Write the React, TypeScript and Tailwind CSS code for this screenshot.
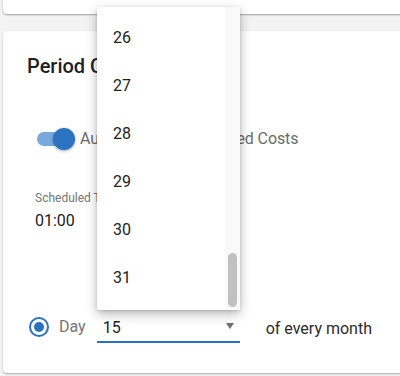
import React from "react";

export default function App() {
  const items = [26, 27, 28, 29, 30, 31];
  return (
    <div
      className="relative h-[376px] w-[400px] overflow-hidden bg-[#f3f3f4]"
      style={{ fontFamily: "Roboto, 'Liberation Sans', sans-serif" }}
    >
      <div className="flex flex-col pl-[3px]">
        {/* top card (mostly scrolled out) */}
        <div className="h-[14px] w-[420px] rounded-b-[4px] bg-white shadow-[0_1px_2px_rgba(0,0,0,0.35)]" />
        {/* main card */}
        <div className="mt-[17px] flex h-[342px] w-[420px] flex-col rounded-[4px] bg-white pl-[24px] shadow-[0_1px_2px_rgba(0,0,0,0.3)]">
          <div className="mt-[21px] h-[28px] text-[20px] font-medium leading-[28px] text-[#1f1f1f]">
            Period Close
          </div>
          {/* switch row */}
          <div className="mt-[47px] flex h-[24px] items-center">
            <div className="relative ml-[10px] h-[14px] w-[34px] rounded-full bg-[#79a9dc]">
              <div className="absolute left-[16px] top-[-4px] h-[22px] w-[22px] rounded-full bg-[#2b72c2] shadow-[0_1px_3px_rgba(0,0,0,0.35)]" />
            </div>
            <span className="ml-[9px] text-[16px] tracking-[-0.1px] text-[#6b6b6b]">
              Automatically Scheduled Costs
            </span>
          </div>
          {/* scheduled time */}
          <div className="ml-[8px] mt-[40px] text-[12px] leading-[14px] text-[#757575]">
            Scheduled Time
          </div>
          <div className="ml-[8px] mt-[6px] text-[16px] leading-[20px] text-[#222]">01:00</div>
          {/* day row */}
          <div className="mt-[82px] flex h-[40px] items-start">
            <div className="mt-[4px] ml-[2px] flex h-[20px] w-[20px] items-center justify-center rounded-full border-2 border-[#2b72c2]">
              <div className="h-[10px] w-[10px] rounded-full bg-[#2b72c2]" />
            </div>
            <span className="ml-[10px] mt-[4px] text-[16px] leading-[20px] text-[#757575]">Day</span>
            <div className="relative ml-[11px] flex h-[30px] w-[143px] items-start border-b-2 border-[#2b72c2] pl-[6px]">
              <span className="mt-[5px] text-[16px] leading-[20px] text-[#222]">15</span>
              <svg
                className="absolute left-[129px] top-[10px]"
                width="8"
                height="6"
                viewBox="0 0 8 6"
              >
                <path d="M0 0 L8 0 L4 6 Z" fill="#707070" />
              </svg>
            </div>
            <span className="ml-[26px] mt-[6px] text-[16px] leading-[20px] text-[#2c2c2c]">
              of every month
            </span>
          </div>
        </div>
      </div>

      {/* dropdown menu overlay */}
      <div className="absolute left-[97px] top-[7px] flex h-[303px] w-[143px] rounded-[2px] bg-white shadow-[0_4px_12px_rgba(0,0,0,0.28),0_1px_3px_rgba(0,0,0,0.15)]">
        <div className="flex flex-1 flex-col pt-[7px]">
          {items.map((n) => (
            <div
              key={n}
              className="flex h-[48px] items-center pl-[16px] text-[16px] text-[#222]"
            >
              {n}
            </div>
          ))}
        </div>
        <div className="relative w-[15px] bg-[#f9f9f9]">
          <div className="absolute bottom-[3px] left-[3px] h-[54px] w-[9px] rounded-full bg-[#c1c1c1]" />
        </div>
      </div>
    </div>
  );
}
